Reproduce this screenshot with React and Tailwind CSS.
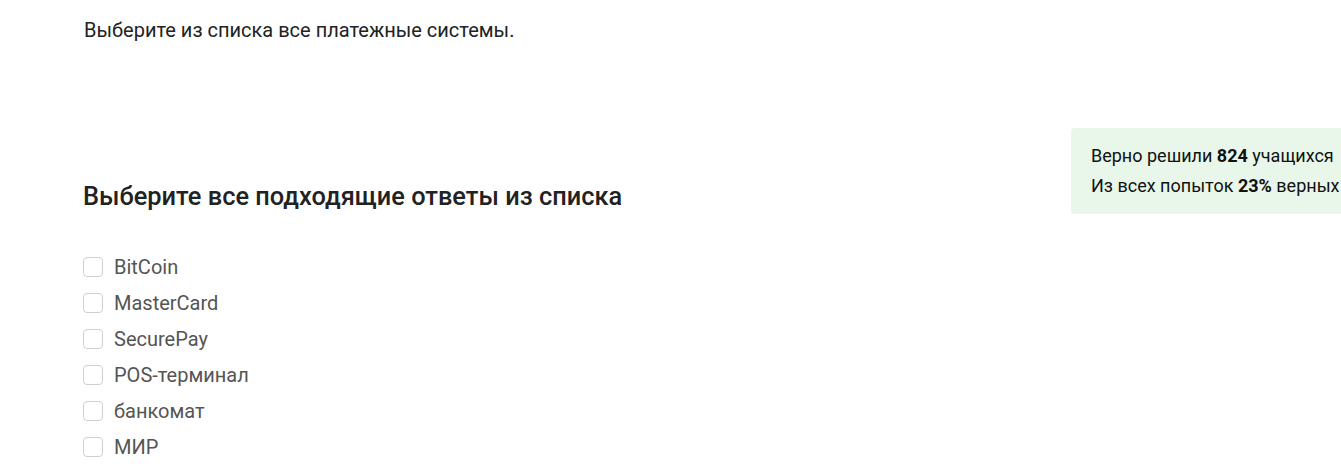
import React from "react";

const options = ["BitCoin", "MasterCard", "SecurePay", "POS-терминал", "банкомат", "МИР"];

const App = () => {
  return (
    <div className="min-h-screen w-full overflow-hidden bg-white font-['Roboto',sans-serif]">
      {/* Question */}
      <div className="pl-[84px] pt-[18px]">
        <p className="text-[20px] leading-6 text-[#222]">Выберите из списка все платежные системы.</p>
      </div>

      <div className="mt-[86px] flex">
        {/* Answers */}
        <div className="flex-1 pl-[83px] pt-[53px]">
          <h2 className="text-[25.4px] leading-[30px] font-medium text-[#222]">
            Выберите все подходящие ответы из списка
          </h2>
          <ul className="mt-[38px]">
            {options.map((opt) => (
              <li key={opt} className="flex h-9 items-center">
                <span className="h-5 w-5 shrink-0 rounded-[4px] border border-[#d0d0d0] bg-white" />
                <span className="ml-[11px] text-[20px] text-[#555]">{opt}</span>
              </li>
            ))}
          </ul>
        </div>

        {/* Stats */}
        <div className="-mr-[60px] w-[330px] shrink-0 self-start">
          <div className="rounded-[4px] bg-[#e8f7e9] px-5 py-[13px] text-[18px] leading-[30px] text-[#111] whitespace-nowrap">
            <p>
              Верно решили <b className="font-bold">824</b> учащихся
            </p>
            <p>
              Из всех попыток <b className="font-bold">23%</b> верных
            </p>
          </div>
        </div>
      </div>
    </div>
  );
};

export default App;
